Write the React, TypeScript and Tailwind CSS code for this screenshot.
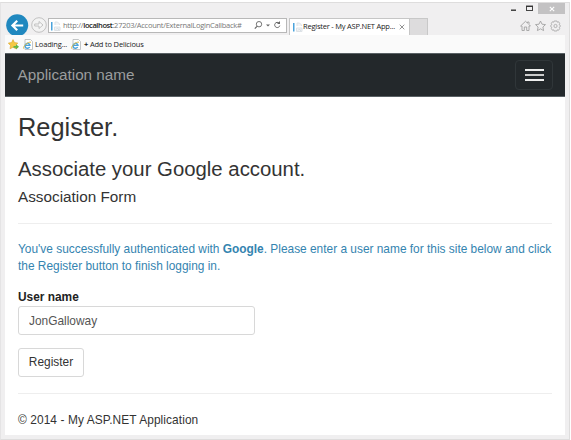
import React from "react";

function PageIcon() {
  return (
    <svg width="10" height="12" viewBox="0 0 10 12" className="shrink-0">
      <rect x="0" y="2" width="1.5" height="8.5" fill="#4ba3dc" />
      <path d="M4 5V2H6.5L8.5 4V5M3.5 10.5V7H9V10.5Z" fill="#f3f4f5" stroke="#dde2e6" />
      <path d="M5 9.5L6.5 8L8 10" stroke="#d5dde4" fill="none" />
    </svg>
  );
}

function IePageIcon() {
  return (
    <svg width="10" height="12" viewBox="0 0 10 12" className="block shrink-0">
      <path d="M2 0.5H7.5L9.5 2.5V10.5H2Z" fill="#fff" stroke="#b4b7b9" strokeWidth="0.8" />
      <path d="M6.7 8A2.5 2.5 0 1 1 7 6.4H2.4" fill="none" stroke="#4aa3dd" strokeWidth="1.4" />
      <path d="M0.6 9.6C-0.4 7.5 5 2.4 8 3.2" fill="none" stroke="#e6bd45" strokeWidth="1" />
    </svg>
  );
}

function BackButton() {
  return (
    <svg width="23" height="21" viewBox="0 0 23 21" className="shrink-0">
      <circle cx="11.2" cy="11.2" r="11" fill="#2088bf" />
      <path d="M17.2 11.5H6.5M11.2 6.7L6.4 11.5L11.2 16.3" fill="none" stroke="#fff" strokeWidth="2.2" />
    </svg>
  );
}

function ForwardButton() {
  return (
    <svg width="16" height="16" viewBox="0 0 16 16" className="shrink-0">
      <circle cx="8" cy="8" r="7.3" fill="#f3f3f3" stroke="#bcbcbc" strokeWidth="0.9" />
      <path d="M3.7 7H8V4.5L12 8L8 11.5V9H3.7Z" fill="#f8f8f8" stroke="#bcbcbc" strokeWidth="0.9" />
    </svg>
  );
}

function FavoriteIcon() {
  return (
    <svg width="11" height="11" viewBox="0 0 11 11" className="shrink-0">
      <path d="M5 0.6L6.5 3.6L9.8 4.1L7.5 6.5L8 9.8L5 8.3L2 9.8L2.5 6.5L0.3 4.1L3.6 3.6Z" fill="#f5c944" stroke="#dba52b" strokeWidth="0.6" />
      <path d="M5.5 7H8V5.2L11 7.8L8 10.6V8.8H5.5Z" fill="#62b545" />
    </svg>
  );
}

function AddressIcons() {
  return (
    <svg width="28" height="11" viewBox="0 0 28 11" className="shrink-0" fill="none" stroke="#666">
      <circle cx="5" cy="4.2" r="2.7" strokeWidth="0.9" />
      <path d="M3 6.3L0.8 8.6" strokeWidth="1.2" />
      <path d="M12 4.5H16L14 6.5Z" fill="#666" stroke="none" />
      <path d="M25.1 3.1A2.6 2.6 0 1 0 25.8 5.6" strokeWidth="1" />
      <path d="M26 1V4H23Z" fill="#666" stroke="none" />
    </svg>
  );
}

function ToolIcons() {
  return (
    <svg width="41" height="12" viewBox="0 0 41 12" className="shrink-0" fill="none" stroke="#a3a3a3" strokeWidth="0.9">
      <path d="M0.6 6L5.5 1.3L7.5 3.2V2H9V4.6L10.4 6H9V10.5H6.7V7H4.3V10.5H2V6Z" />
      <path d="M20.5 1L22 4.2L25.5 4.6L22.9 7L23.6 10.6L20.5 8.8L17.4 10.6L18.1 7L15.5 4.6L19 4.2Z" />
      <path d="M34.1 1H36.9L37.3 2.2L38.7 1.8L39.7 3.5L39.2 4.6L40.2 5.3V6.7L39.2 7.4L39.7 8.5L38.7 10.2L37.3 9.8L36.9 11H34.1L33.7 9.8L32.3 10.2L31.3 8.5L31.8 7.4L30.8 6.7V5.3L31.8 4.6L31.3 3.5L32.3 1.8L33.7 2.2Z" strokeWidth="0.8" />
      <circle cx="35.5" cy="6" r="1.6" strokeWidth="0.8" />
    </svg>
  );
}

function BrowserChrome() {
  return (
    <header className="h-[50px] shrink-0 font-['Open_Sans','Noto_Sans',sans-serif] text-[7.5px] font-medium text-[#222]">
      <div className="flex h-[11px] justify-end pr-[4px]">
        <svg width="33" height="11" viewBox="0 0 33 11">
          <path d="M6 7.2H11" stroke="#333" strokeWidth="1.4" />
          <rect x="21.5" y="3.5" width="6" height="4" fill="none" stroke="#444" />
          <path d="M21 3.2H28" stroke="#333" strokeWidth="1.3" />
        </svg>
        <div className="flex w-[27px] items-center justify-center bg-[#c3c2c3]">
          <svg width="6" height="6" viewBox="0 0 6 6">
            <path d="M0.8 0.8L5.2 5.2M5.2 0.8L0.8 5.2" stroke="#fff" strokeWidth="1.1" />
          </svg>
        </div>
      </div>
      <div className="flex h-[21px] items-end pl-[5px]">
        <BackButton />
        <div className="mb-px ml-[2px] flex h-[18px] items-center"><ForwardButton /></div>
        <div className="mb-[2px] ml-px flex h-[15px] w-[239px] items-center border border-[#b8b8b8] bg-white pl-[2px] pr-[4px]">
          <PageIcon />
          <span className="ml-[2px] flex-1 whitespace-nowrap tracking-[-0.26px] text-[#777]">
            http://<span className="font-semibold tracking-[-0.4px] text-[#222]">localhost</span>:27203/Account/ExternalLoginCallback#
          </span>
          <AddressIcons />
        </div>
        <div className="ml-[2px] flex h-[17px] w-[121px] items-center border border-b-0 border-[#c6c6c6] bg-white pl-[3px] pr-[4px]">
          <PageIcon />
          <span className="flex-1 whitespace-nowrap tracking-[-0.22px]">Register - My ASP.NET App...</span>
          <svg width="6" height="6" viewBox="0 0 6 6">
            <path d="M0.7 0.7L5.3 5.3M5.3 0.7L0.7 5.3" stroke="#777" strokeWidth="0.8" />
          </svg>
        </div>
        <div className="h-[17px] w-[18px] border border-b-0 border-l-0 border-[#c8c8c8] bg-[#dddcdd]" />
        <div className="mb-[3px] ml-auto mr-[8px]"><ToolIcons /></div>
      </div>
      <div className="ml-[4px] mr-[4px] flex h-[18px] items-center bg-[#fafafa] pl-[3px] pt-px">
        <FavoriteIcon />
        <span className="ml-[4px]"><IePageIcon /></span>
        <span className="ml-[2px] w-[33px] whitespace-nowrap tracking-[-0.15px]">Loading...</span>
        <span className="ml-[3px]"><IePageIcon /></span>
        <span className="ml-[3px] whitespace-nowrap tracking-[-0.18px]"><b>+</b> Add to Delicious</span>
      </div>
    </header>
  );
}

export default function App() {
  return (
    <div className="h-[440px] w-[571px] overflow-hidden bg-white pt-[2px] font-['Liberation_Sans',Arial,sans-serif]">
      <div className="flex h-[438px] w-[570px] flex-col border border-[#dedddd] border-l-[#e5e4e5] bg-[#f0eff0]">
        <BrowserChrome />
        <div className="mb-[4px] ml-[4px] mr-[4px] flex min-h-0 flex-1 flex-col bg-white">
          <nav className="flex h-[44px] shrink-0 items-center justify-between border-y border-y-[#596064] bg-[#23282b] pl-[12.5px] pr-[12px]">
            <span className="text-[15.25px] text-[#9b9d9e]">Application name</span>
            <button aria-label="Menu" className="flex h-[30px] w-[38px] flex-col items-center justify-center gap-[3px] rounded-[4px] border border-[#303639]">
              <span className="h-[2px] w-[19px] bg-[#eee]" />
              <span className="h-[2px] w-[19px] bg-[#ccc]" />
              <span className="h-[2px] w-[19px] bg-[#eee]" />
            </button>
          </nav>
          <main className="mx-[13px] text-[11.9px] leading-[17px] text-[#333]">
            <h1 className="mt-[16px] text-[25.4px] leading-[28px]">Register.</h1>
            <h2 className="mt-[17px] text-[20.35px] leading-[22px]">Associate your Google account.</h2>
            <h4 className="mt-[8px] text-[15.3px] leading-[17px]">Association Form</h4>
            <hr className="mt-[18px] border-[#eee]" />
            <p className="mt-[17px] whitespace-nowrap text-[#3484b0]">
              You've successfully authenticated with <strong>Google</strong>. Please enter a user name for this site below and click
              <br />
              the Register button to finish logging in.
            </p>
            <label htmlFor="username" className="mt-[14px] block font-bold text-[#222]">User name</label>
            <input id="username" defaultValue="JonGalloway" className="block h-[29px] w-[237px] rounded-[3px] border border-[#d8d8d8] px-[10px] text-[#555] outline-none" />
            <button className="mt-[13px] block h-[29px] w-[66px] rounded-[3px] border border-[#d8d8d8]">Register</button>
            <hr className="mt-[16px] border-[#eee]" />
            <footer className="mt-[18px] tracking-[0.09px]">© 2014 - My ASP.NET Application</footer>
          </main>
        </div>
      </div>
    </div>
  );
}
